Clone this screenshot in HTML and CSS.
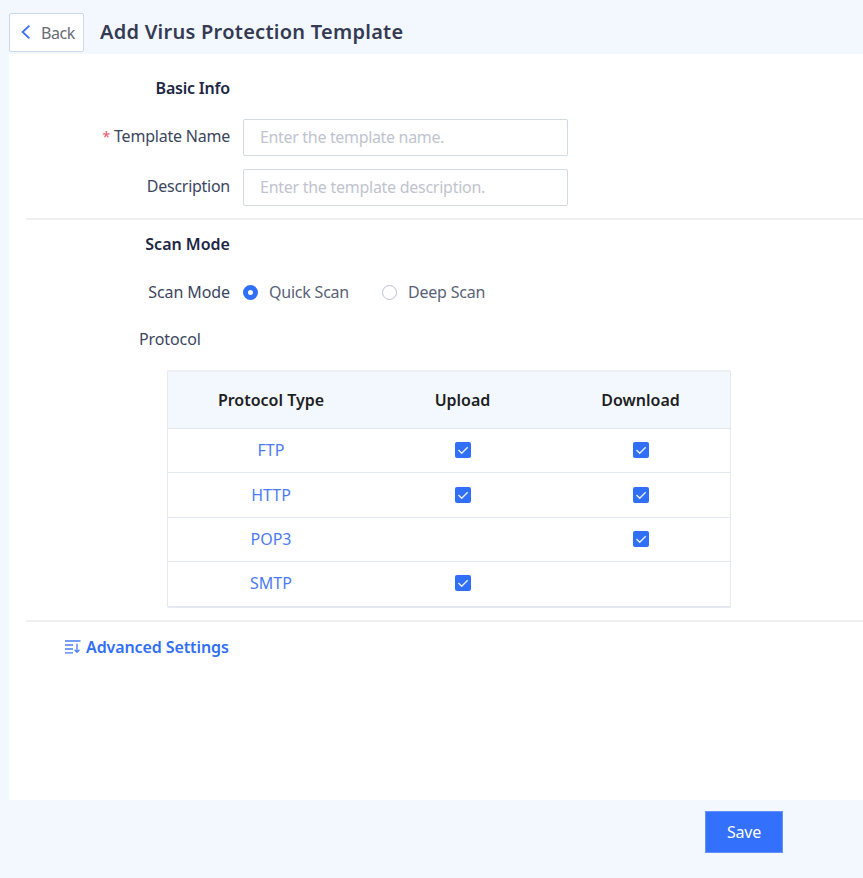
FILE: index.html
```html
<!DOCTYPE html>
<html lang="en">
<head>
<meta charset="utf-8">
<title>Add Virus Protection Template</title>
<link rel="stylesheet" href="styles.css">
</head>
<body>
<header class="header">
  <button class="back" type="button">
    <svg width="10" height="14" viewBox="0 0 10 14"><path d="M8.400 .600 1.600 7l6.800 6.400" fill="none" stroke="#3e6ff5" stroke-width="1.8"/></svg>
    <span>Back</span>
  </button>
  <h1 class="title">Add Virus Protection Template</h1>
</header>
<main class="panel">
  <section class="section basic">
    <h2 class="heading basic-heading">Basic Info</h2>
    <div class="field">
      <label class="label name-label" for="name"><span class="star">*</span>Template Name</label>
      <input class="input name-input" id="name" placeholder="Enter the template name.">
    </div>
    <div class="field">
      <label class="label desc-label" for="desc">Description</label>
      <input class="input desc-input" id="desc" placeholder="Enter the template description.">
    </div>
  </section>
  <section class="section scan">
    <h2 class="heading scan-heading">Scan Mode</h2>
    <div class="modes">
      <span class="label mode-label">Scan Mode</span>
      <span class="radio on"></span><span class="option quick">Quick Scan</span>
      <span class="radio"></span><span class="option deep">Deep Scan</span>
    </div>
    <div class="protocol">Protocol</div>
    <table class="table">
      <colgroup><col class="c1"><col class="c2"><col class="c3"></colgroup>
      <thead><tr><th class="type">Protocol Type</th><th>Upload</th><th class="down">Download</th></tr></thead>
      <tbody>
        <tr><td>FTP</td><td><svg class="check" viewBox="0 0 16 16"><path d="M3.500 8l3.200 3.200 6-6"/></svg></td><td><svg class="check" viewBox="0 0 16 16"><path d="M3.500 8l3.200 3.200 6-6"/></svg></td></tr>
        <tr><td>HTTP</td><td><svg class="check" viewBox="0 0 16 16"><path d="M3.500 8l3.200 3.200 6-6"/></svg></td><td><svg class="check" viewBox="0 0 16 16"><path d="M3.500 8l3.200 3.200 6-6"/></svg></td></tr>
        <tr><td>POP3</td><td></td><td><svg class="check" viewBox="0 0 16 16"><path d="M3.500 8l3.200 3.200 6-6"/></svg></td></tr>
        <tr><td>SMTP</td><td><svg class="check" viewBox="0 0 16 16"><path d="M3.500 8l3.200 3.200 6-6"/></svg></td><td></td></tr>
      </tbody>
    </table>
  </section>
  <a class="advanced">
    <svg width="16" height="14" viewBox="0 0 16 14" fill="none" stroke="#4a7df8" stroke-width="1.3"><path d="M0 1h15.500M0 5h8M0 9h8M0 12.800h8M12 3.800v8.600M9.600 9.800l2.400 2.600 2.400-2.600"/></svg>
    <span>Advanced Settings</span>
  </a>
</main>
<footer class="footer"><button class="save" type="button">Save</button></footer>
</body>
</html>
```
FILE: styles.css
```css
* { box-sizing: border-box; }
body {
  margin: 0;
  height: 878px;
  overflow: hidden;
  background: #f3f8ff;
  font: 16px/22px "Noto Sans", "Open Sans", sans-serif;
  color: #3b465e;
}
h1, h2 { margin: 0; }
button, input { font: inherit; }
.header { height: 54px; padding: 13px 0 0 9px; display: flex; align-items: flex-start; }
.back {
  width: 75px; height: 39px; padding: 1px 0 0 11px;
  display: flex; align-items: center; gap: 10px;
  background: #fff; border: 1px solid #c9d9ee; border-radius: 2px;
  color: #666b75; letter-spacing: -.4px;
}
.back svg { margin-top: -3px; }
.title { margin: 5px 0 0 16px; font-size: 20px; line-height: 28px; font-weight: 600; letter-spacing: .26px; color: #363b54; white-space: nowrap; }
.panel { height: 746px; margin-left: 9px; padding-left: 17px; background: #fff; }
.section { border-bottom: 2px solid #efeff1; }
.basic { height: 166px; padding-top: 23px; }
.scan { height: 402px; padding-top: 13px; }
.heading { width: 204px; text-align: right; font-size: 16px; line-height: 22px; font-weight: 600; color: #1c2744; }
.basic-heading { letter-spacing: -.2px; }
.field { height: 37px; margin-top: 13px; display: flex; gap: 13px; }
.heading + .field { margin-top: 20px; }
.label { width: 204px; text-align: right; line-height: 34px; white-space: nowrap; }
.name-label { letter-spacing: -.22px; }
.desc-label { letter-spacing: -.27px; }
.mode-label { letter-spacing: -.1px; }
.star { color: #ee5566; margin-right: 4px; font-size: 14px; }
.input {
  width: 325px; height: 37px; padding: 0 16px 2px;
  border: 1px solid #d3dbe2; border-radius: 2px; background: #fff; outline: none;
}
.input::placeholder { color: #bfc4cf; opacity: 1; }
.name-input { letter-spacing: -.33px; }
.desc-input { letter-spacing: -.27px; }
.modes { display: flex; align-items: center; height: 22px; margin-top: 26px; }
.radio { width: 15px; height: 15px; margin-left: 13px; border: 1px solid #b9c1d3; border-radius: 50%; }
.radio.on { border: 5.500px solid #306ff8; }
.option { margin-left: 11px; color: #596275; letter-spacing: -.22px; white-space: nowrap; }
.quick { width: 80px; margin-right: 20px; }
.protocol { margin: 25px 0 0 113px; letter-spacing: -.1px; }
.table {
  width: 564px; margin: 20px 0 0 141px; table-layout: fixed;
  border-collapse: separate; border-spacing: 0;
  border: 1px solid #e6eaf0; border-top: 2px solid #eceff4; border-radius: 2px;
}
.c1 { width: 206px; } .c2 { width: 177px; } .c3 { width: 179px; }
th, td { padding: 0; text-align: center; vertical-align: middle; }
th { height: 57px; background: #f3f8ff; color: #1e1f24; font-weight: 600; border-bottom: 1px solid #e1e7f0; }
td { height: 44.400px; padding-bottom: 1px; color: #4b7bf5; border-bottom: 1px solid #e1e7f0; }
.check { display: block; width: 16px; height: 16px; margin: 0 auto; background: #306ff8; border-radius: 2px; fill: none; stroke: #e6efff; stroke-width: 1.4; }
.advanced { display: flex; align-items: center; gap: 5px; margin: 14px 0 0 39px; color: #306ff8; font-weight: 600; letter-spacing: -.1px; white-space: nowrap; }
.footer { height: 78px; padding: 11px 80px 0 0; display: flex; justify-content: flex-end; }
.save { width: 78px; height: 42px; padding: 0; background: #3370fb; border: 1px solid #6293fb; color: #fff; letter-spacing: -.2px; }
```
